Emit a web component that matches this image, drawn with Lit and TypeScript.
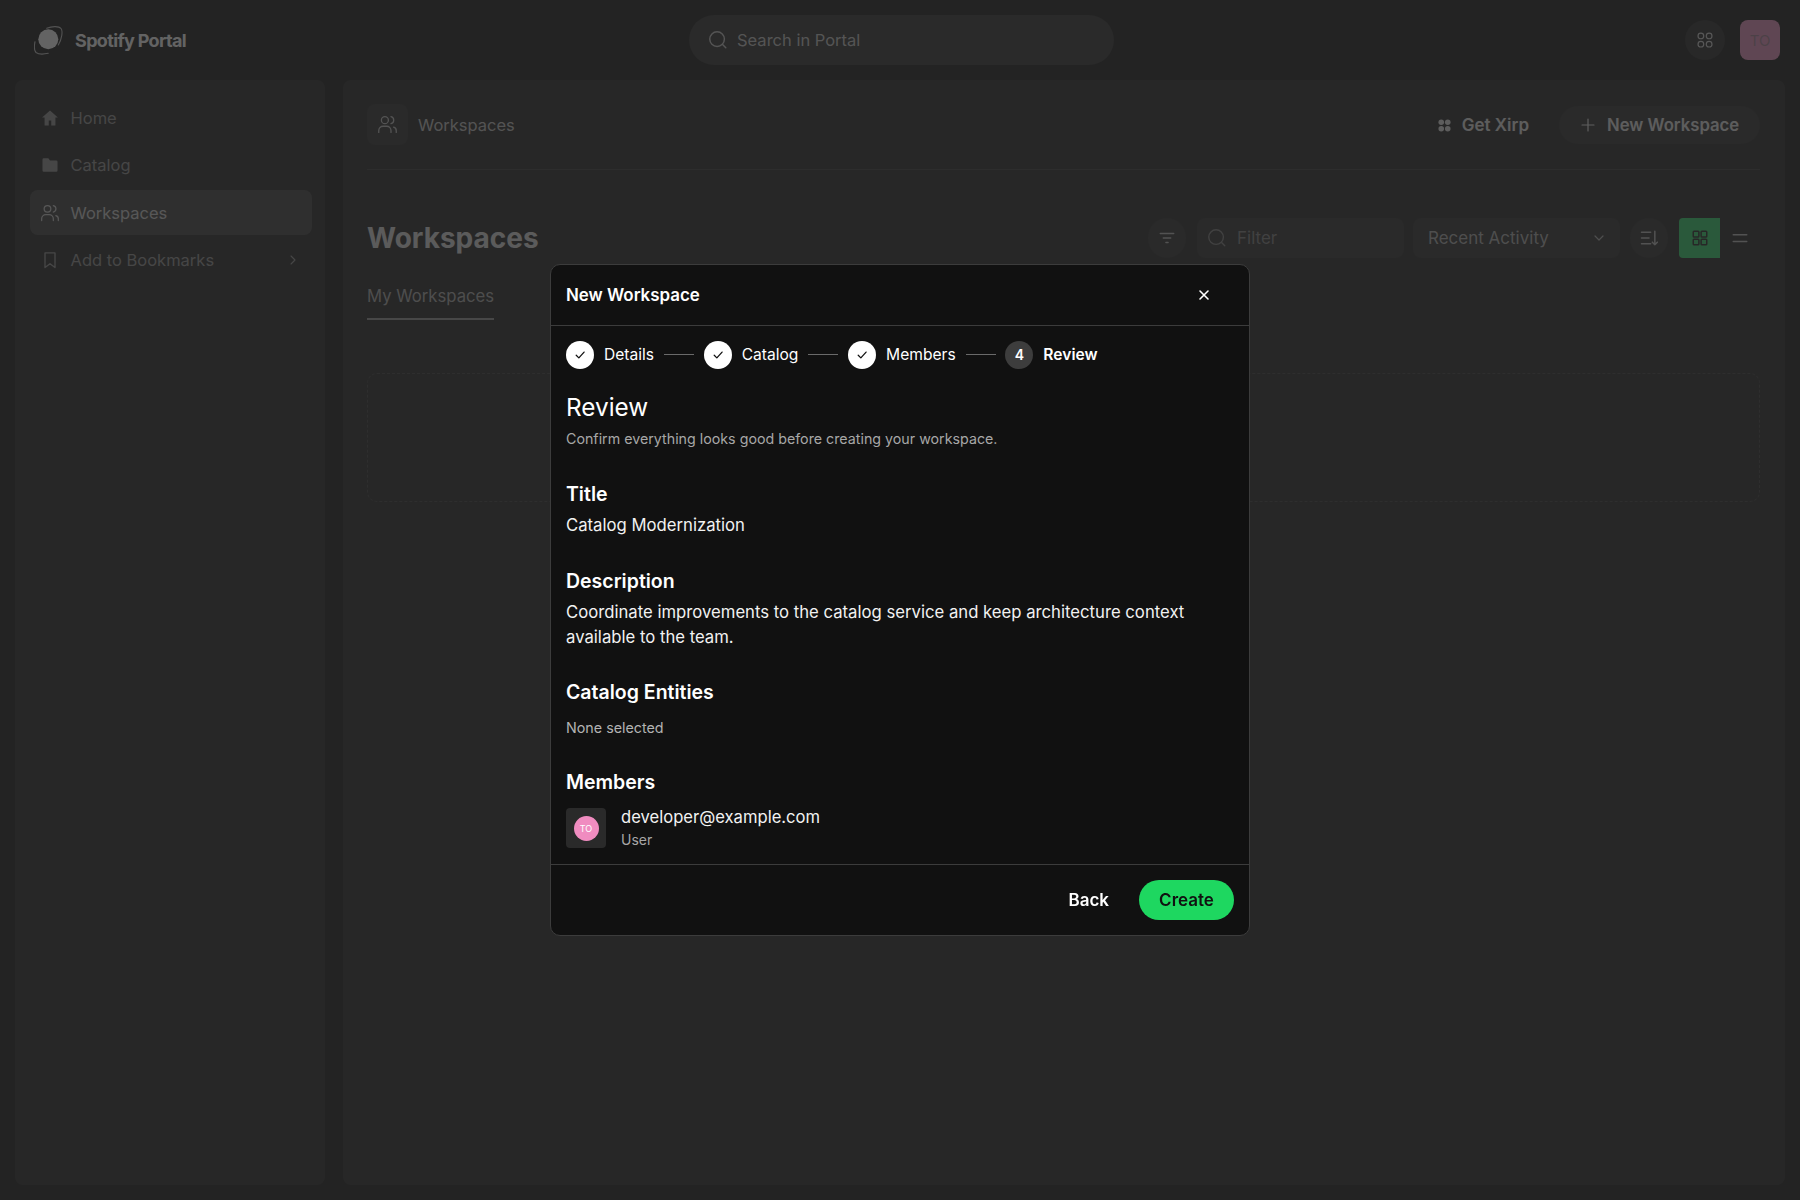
import { LitElement, html, css, svg } from "lit";
import { customElement } from "lit/decorators.js";

const ic = (body: unknown, size = 20, sw = 1.8) => html`<svg width=${size} height=${size} viewBox="0 0 24 24" fill="none" stroke="currentColor" stroke-width=${sw} stroke-linecap="round" stroke-linejoin="round">${body}</svg>`;
const users = svg`<circle cx="9" cy="7" r="4"/><path d="M2 21v-2a5 5 0 0 1 5-5h4a5 5 0 0 1 5 5v2"/><path d="M16 3.1a4 4 0 0 1 0 7.8"/><path d="M22 21v-2a4 4 0 0 0-3-3.9"/>`;
const search = svg`<circle cx="11" cy="11" r="8"/><path d="M20.5 20.5 17 17"/>`;
const grid = svg`<rect x="3" y="3" width="7.5" height="7.5" rx="1"/><rect x="13.5" y="3" width="7.5" height="7.5" rx="1"/><rect x="3" y="13.5" width="7.5" height="7.5" rx="1"/><rect x="13.5" y="13.5" width="7.5" height="7.5" rx="1"/>`;
const rings = svg`<circle cx="6.500" cy="6.500" r="3.800"/><circle cx="17.500" cy="6.500" r="3.800"/><circle cx="6.500" cy="17.500" r="3.800"/><circle cx="17.500" cy="17.500" r="3.800"/>`;
const check = svg`<path d="M5.5 12.5l4.5 4.5 9-10"/>`;

@customElement("app-root")
export class AppRoot extends LitElement {
  static styles = css`
    :host { display: block; position: relative; height: 100vh; min-height: 1200px; background: #000; color: #fff; font-family: Inter, "Liberation Sans", sans-serif; font-size: 16px; overflow: hidden; }
    * { box-sizing: border-box; }
    svg { display: block; flex: none; }
    .top { height: 80px; display: grid; grid-template-columns: 655px 425px 1fr; align-items: center; padding: 0 20px 0 34px; }
    .logo { display: flex; align-items: center; gap: 11px; font-weight: 700; font-size: 18px; letter-spacing: -0.65px; }
    .search { height: 50px; border-radius: 25px; background: #1c1c1c; display: flex; align-items: center; gap: 8px; padding: 0 18px; color: #c4c4c4; font-size: 16.5px; }
    .top-right { display: flex; justify-content: flex-end; align-items: center; gap: 15px; }
    .round { width: 40px; height: 40px; border-radius: 20px; background: #141414; display: flex; align-items: center; justify-content: center; color: #d0d0d0; }
    .avatar { width: 40px; height: 40px; border-radius: 8px; background: #f08cc0; display: flex; align-items: center; justify-content: center; color: #a57a90; font-size: 15px; }
    .shell { display: grid; grid-template-columns: 310px 1fr; gap: 18px; padding: 0 15px 15px; height: 1120px; }
    .panel { background: #121212; border-radius: 8px; }
    .side { padding: 15px 13px 0 15px; display: flex; flex-direction: column; gap: 2.5px; }
    .nav { height: 45px; display: flex; align-items: center; padding: 0 11px 0 10px; gap: 10.5px; border-radius: 8px; color: #8c8c8c; font-size: 16.5px; }
    .nav.on { background: #333; color: #cfcfcf; }
    .nav .grow { flex: 1; }
    .main { padding: 24px 25px 0 24px; }
    .crumbs { height: 66px; display: flex; align-items: flex-start; justify-content: space-between; border-bottom: 1px solid #2a2a2a; }
    .crumb { display: flex; align-items: center; gap: 10px; font-size: 16.5px; color: #c0c0c0; }
    .tile { width: 41px; height: 41px; border-radius: 8px; background: #1c1c1c; display: flex; align-items: center; justify-content: center; }
    .acts { display: flex; align-items: center; gap: 30px; padding-top: 2px; }
    .xirp { display: flex; align-items: center; gap: 11px; font-weight: 600; font-size: 17px; color: #e8e8e8; }
    .pill { height: 38px; width: 201px; border-radius: 19px; background: #1c1c1c; display: flex; align-items: center; gap: 10px; padding: 0 20px; font-weight: 600; font-size: 16.7px; color: #e8e8e8; white-space: nowrap; }
    .headrow { display: flex; align-items: center; justify-content: space-between; margin-top: 47.5px; height: 40px; }
    h1 { margin: 0; font-size: 28px; font-weight: 700; color: #e0e0e0; }
    .tools { display: flex; align-items: center; }
    .tbtn { width: 38px; height: 40px; border-radius: 19px; background: #1c1c1c; display: flex; align-items: center; justify-content: center; color: #bbb; }
    .filter { width: 207px; height: 40px; border-radius: 8px; background: #1c1c1c; margin-left: 11px; display: flex; align-items: center; gap: 9px; padding: 0 9px; color: #777; font-size: 17px; }
    .select { width: 207px; height: 40px; border-radius: 8px; background: #1c1c1c; margin-left: 9px; display: flex; align-items: center; justify-content: space-between; padding: 0 13px 0 15px; color: #aaa; font-size: 17px; }
    .sort { margin-left: 10px; }
    .view { width: 41px; height: 40px; border-radius: 4px 0 0 4px; background: #1ed760; margin-left: 11px; display: flex; align-items: center; justify-content: center; color: #111; }
    .list { width: 40px; height: 40px; display: flex; align-items: center; justify-content: center; color: #bbb; }
    .tab { display: inline-block; margin-top: 26.5px; padding-bottom: 10px; border-bottom: 2px solid #8f8f8f; color: #a8a8a8; font-size: 16.7px; line-height: 24px; }
    .empty { margin-top: 53px; height: 129px; border: 1px dashed #2c2c2c; border-radius: 10px; }
    .scrim { position: fixed; inset: 0; background: rgba(47,47,47,0.75); display: flex; align-items: center; justify-content: center; }
    .dialog { width: 700px; height: 672px; background: #111; border: 1px solid #3c3c3c; border-radius: 10px; display: flex; flex-direction: column; }
    .dhead { height: 61px; flex: none; border-bottom: 1px solid #3c3c3c; display: flex; align-items: center; justify-content: space-between; padding: 0 37px 1px 15px; font-weight: 600; font-size: 16.9px; }
    .dbody { flex: 1; padding: 14.5px 15px 0; overflow: hidden; }
    .steps { display: flex; align-items: center; height: 28px; font-size: 15.6px; gap: 9.9px; }
    .dot { width: 28px; height: 28px; border-radius: 50%; background: #fff; color: #111; display: flex; align-items: center; justify-content: center; }
    .dot.cur { background: #3d3d3d; color: #fff; font-weight: 600; font-size: 14px; }
    .bar { width: 30px; height: 1px; background: #6a6a6a; }
    .steps b { font-weight: 600; }
    h2 { margin: 22px 0 0; font-size: 24.3px; line-height: 32px; font-weight: 400; }
    .sub { margin: 6.5px 0 0; font-size: 14.25px; line-height: 20px; color: #a7a7a7; }
    h3 { font-size: 19.5px; line-height: 24px; font-weight: 600; margin: 0; }
    .m33 { margin-top: 33px; }
    .m31 { margin-top: 31px; }
    .m30 { margin-top: 30px; }
    .m32 { margin-top: 32px; }
    .val { margin: 7px 0 0; font-size: 16.7px; line-height: 25px; color: #f2f2f2; }
    .none { margin: 14px 0 0; font-size: 14.3px; line-height: 20px; color: #b3b3b3; }
    .member { display: flex; gap: 15px; align-items: center; margin-top: 14px; height: 40px; }
    .mtile { width: 40px; height: 40px; border-radius: 4px; background: #2a2a2a; display: flex; align-items: center; justify-content: center; }
    .mdot { width: 25px; height: 25px; border-radius: 50%; background: #f08cc0; color: #fff; display: flex; align-items: center; justify-content: center; font-size: 9px; }
    .mail { font-size: 16.6px; line-height: 20px; color: #f2f2f2; }
    .role { font-size: 14px; line-height: 20px; margin-top: 3px; color: #a7a7a7; }
    .dfoot { height: 71px; flex: none; border-top: 1px solid #3c3c3c; display: flex; align-items: center; justify-content: flex-end; gap: 30px; padding: 0 15px; font-weight: 600; font-size: 17px; }
    .create { width: 95px; height: 40px; border-radius: 20px; background: #1ed760; color: #111; display: flex; align-items: center; justify-content: center; }
  `;

  render() {
    return html`
      <div class="top">
        <div class="logo">
          <svg width="30" height="30" viewBox="0 0 30 30" fill="none" stroke="#fff" stroke-linecap="round"><circle cx="14.3" cy="14.3" r="10" fill="#fff" stroke="none"/><path d="M12.7 3.300C18 1 25 1 27 3.500C29 6 28 14 24.300 20" stroke-width="1.100" opacity="0.75"/><path d="M1 16.700C0 22 .5 26 2 27.500C4 29 9 29.500 14.300 28.300" stroke-width="1.100" opacity="0.75"/></svg>
          <span>Spotify Portal</span>
        </div>
        <div class="search">${ic(search, 22, 1.6)}<span>Search in Portal</span></div>
        <div class="top-right">
          <div class="round">${ic(rings, 18, 1.6)}</div>
          <div class="avatar">TO</div>
        </div>
      </div>
      <div class="shell">
        <div class="panel side">
          <div class="nav"><svg width="20" height="20" viewBox="0 0 24 24" fill="currentColor"><path d="M12 3 2.500 11.500H5.500V21h5v-6h3v6h5v-9.500h3z"/></svg><span>Home</span></div>
          <div class="nav"><svg width="20" height="20" viewBox="0 0 24 24" fill="currentColor"><path d="M3 5.500A1.500 1.500 0 0 1 4.500 4H10l2 2.500h7.500A1.500 1.500 0 0 1 21 8v10.500a1.500 1.500 0 0 1-1.500 1.500h-15A1.500 1.500 0 0 1 3 18.500z"/></svg><span>Catalog</span></div>
          <div class="nav on">${ic(users, 20, 1.5)}<span>Workspaces</span></div>
          <div class="nav">${ic(svg`<path d="M6 3.500h12V21l-6-4.500L6 21z"/>`, 20, 1.6)}<span class="grow">Add to Bookmarks</span>${ic(svg`<path d="M9 6l6 6-6 6"/>`, 16, 1.6)}</div>
        </div>
        <div class="panel main">
          <div class="crumbs">
            <div class="crumb"><div class="tile">${ic(users, 21, 1.5)}</div><span>Workspaces</span></div>
            <div class="acts">
              <div class="xirp"><svg width="13" height="13" viewBox="0 0 14 14" fill="currentColor"><circle cx="3.500" cy="3.500" r="3"/><circle cx="10.500" cy="3.500" r="3"/><circle cx="3.500" cy="10.500" r="3"/><circle cx="10.500" cy="10.500" r="3"/></svg><span>Get Xirp</span></div>
              <div class="pill">${ic(svg`<path d="M12 4v16M4 12h16"/>`, 18, 1.6)}<span>New Workspace</span></div>
            </div>
          </div>
          <div class="headrow">
            <h1>Workspaces</h1>
            <div class="tools">
              <div class="tbtn">${ic(svg`<path d="M3 6h18M7 12h10M10.500 18h3"/>`, 18, 1.8)}</div>
              <div class="filter">${ic(search, 22, 1.5)}<span>Filter</span></div>
              <div class="select"><span>Recent Activity</span>${ic(svg`<path d="M6 9l6 6 6-6"/>`, 16, 1.8)}</div>
              <div class="tbtn sort">${ic(svg`<path d="M3 5h11M3 12h9M3 19h11M19 4v16M16 17l3 3 3-3"/>`, 20, 1.8)}</div>
              <div class="view">${ic(grid, 18, 2)}</div>
              <div class="list">${ic(svg`<path d="M3 7.500h18M3 16.500h18"/>`, 18, 2)}</div>
            </div>
          </div>
          <div class="tab">My Workspaces</div>
          <div class="empty"></div>
        </div>
      </div>
      <div class="scrim">
        <div class="dialog">
          <div class="dhead"><span>New Workspace</span>${ic(svg`<path d="M6 6l12 12M18 6 6 18"/>`, 16, 2.4)}</div>
          <div class="dbody">
            <div class="steps">
              <div class="dot">${ic(check, 14, 2.2)}</div><span>Details</span><div class="bar"></div>
              <div class="dot">${ic(check, 14, 2.2)}</div><span>Catalog</span><div class="bar"></div>
              <div class="dot">${ic(check, 14, 2.2)}</div><span>Members</span><div class="bar"></div>
              <div class="dot cur">4</div><b>Review</b>
            </div>
            <h2>Review</h2>
            <p class="sub">Confirm everything looks good before creating your workspace.</p>
            <h3 class="m33">Title</h3>
            <p class="val">Catalog Modernization</p>
            <h3 class="m31">Description</h3>
            <p class="val">Coordinate improvements to the catalog service and keep architecture context available to the team.</p>
            <h3 class="m30">Catalog Entities</h3>
            <p class="none">None selected</p>
            <h3 class="m32">Members</h3>
            <div class="member">
              <div class="mtile"><div class="mdot">TO</div></div>
              <div><div class="mail">developer@example.com</div><div class="role">User</div></div>
            </div>
          </div>
          <div class="dfoot"><span>Back</span><div class="create">Create</div></div>
        </div>
      </div>
    `;
  }
}
